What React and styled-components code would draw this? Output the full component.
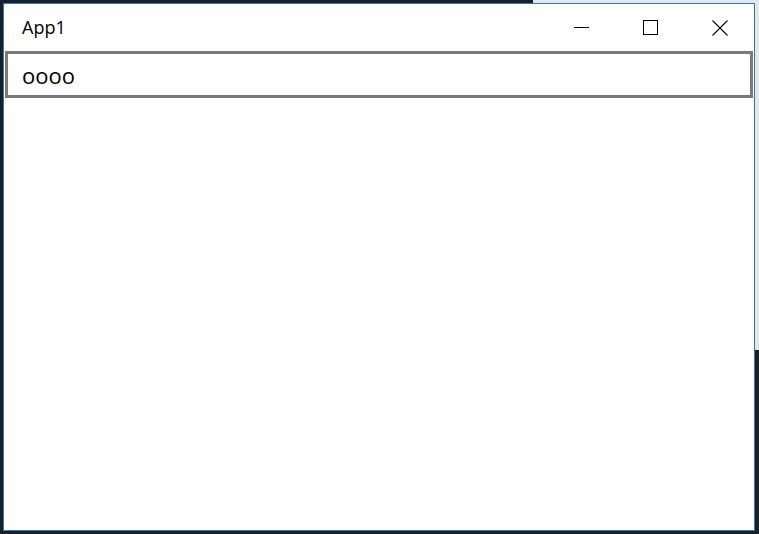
import React from "react";
import styled, { createGlobalStyle } from "styled-components";

const Global = createGlobalStyle`
  html, body { margin: 0; padding: 0; }
  body {
    width: 759px;
    height: 534px;
    overflow: hidden;
    background:
      linear-gradient(#e6e6e6, #e6e6e6) right top / 226px 350px no-repeat,
      #1e1e1e;
    font-family: "Open Sans", "Noto Sans", sans-serif;
  }
`;

const Desktop = styled.div`
  padding: 3px;
  width: 759px;
  height: 534px;
  box-sizing: border-box;
`;

const Window = styled.div`
  width: 752px;
  height: 528px;
  box-sizing: border-box;
  border: 1px solid #1a7fd9;
  background: #ffffff;
  display: flex;
  flex-direction: column;
`;

const TitleBar = styled.div`
  height: 47px;
  display: flex;
  align-items: center;
  flex-shrink: 0;
`;

const Title = styled.div`
  flex: 1;
  padding-left: 18px;
  font-size: 18px;
  color: #000;
  line-height: 47px;
`;

const CaptionButton = styled.div`
  width: 69px;
  height: 47px;
  display: flex;
  align-items: center;
  justify-content: center;
  color: #000;
`;

const TextBox = styled.div`
  margin: 0 1px;
  height: 47px;
  box-sizing: border-box;
  border: 3px solid #7a7a7a;
  padding-left: 14px;
  display: flex;
  align-items: center;
  font-size: 22px;
  color: #000;
`;

const Body = styled.div`
  flex: 1;
`;

export default function App() {
  return (
    <>
      <Global />
      <Desktop>
        <Window>
          <TitleBar>
            <Title>App1</Title>
            <CaptionButton>
              <svg width="15" height="15" viewBox="0 0 15 15">
                <line x1="0" y1="7.5" x2="15" y2="7.5" stroke="#000" strokeWidth="1" />
              </svg>
            </CaptionButton>
            <CaptionButton>
              <svg width="15" height="15" viewBox="0 0 15 15">
                <rect x="0.5" y="0.5" width="14" height="14" fill="none" stroke="#000" strokeWidth="1" />
              </svg>
            </CaptionButton>
            <CaptionButton>
              <svg width="16" height="16" viewBox="0 0 16 16">
                <path d="M0.5 0.5 L15.5 15.5 M15.5 0.5 L0.5 15.5" stroke="#000" strokeWidth="1.1" fill="none" />
              </svg>
            </CaptionButton>
          </TitleBar>
          <TextBox>oooo</TextBox>
          <Body />
        </Window>
      </Desktop>
    </>
  );
}
